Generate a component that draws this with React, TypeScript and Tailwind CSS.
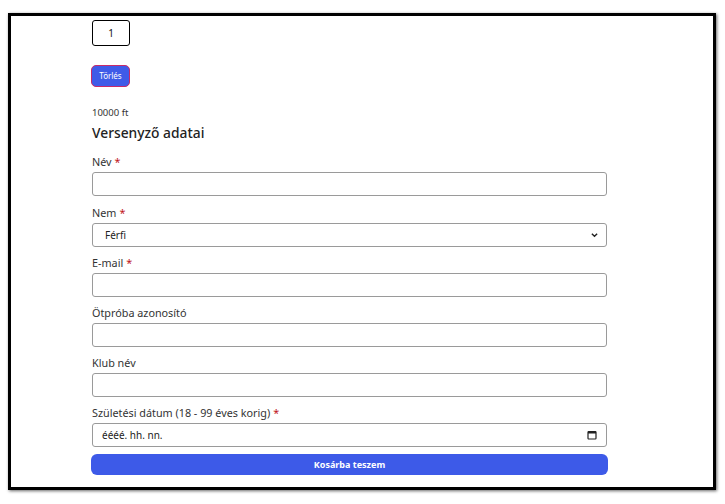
export default function App() {
  const label = "block text-[10.8px] leading-[12px] text-[#333] mb-[4px]";
  const input =
    "block w-full h-[24px] rounded-[3px] border border-[#9a9a9a] bg-white px-[10px] text-[10px] text-[#222] outline-none";
  const req = <span className="text-[#c0151b] ml-[3px]">*</span>;

  return (
    <div className="w-[725px] h-[504px] bg-white pt-[13px] pl-[8px] font-['Noto_Sans',sans-serif]">
      <div className="w-[708px] h-[477px] border-[3px] border-black bg-white shadow-[1px_1px_3px_rgba(0,0,0,0.6)] pl-[81px] pt-[4px]">
        <div className="w-[515px]">
          <div className="w-[38px] h-[26px] rounded-[3px] border-[1.5px] border-black flex items-center justify-center text-[10px] text-[#111]">
            1
          </div>

          <button className="mt-[19px] -ml-[1px] w-[39px] h-[22px] rounded-[5px] bg-[#3f5be8] border-[1.5px] border-[#c72a6a] text-white text-[8px] flex items-center justify-center">
            Törlés
          </button>

          <div className="mt-[20px] text-[9.5px] leading-[12px] text-[#333]">10000 ft</div>
          <h2 className="mt-[4px] text-[13.8px] leading-[20px] font-medium text-[#222]">Versenyző adatai</h2>

          <div className="mt-[13px]">
            <label className={label}>Név{req}</label>
            <input className={input} />
          </div>

          <div className="mt-[11px]">
            <label className={label}>Nem{req}</label>
            <div className="relative">
              <select className={input + " appearance-none pl-[12px]"}>
                <option>Férfi</option>
              </select>
              <svg className="absolute right-[9px] top-[9px] w-[7px] h-[6px]" viewBox="0 0 8 6">
                <path d="M1 1.5 L4 4.5 L7 1.5" fill="none" stroke="#222" strokeWidth="1.6" />
              </svg>
            </div>
          </div>

          <div className="mt-[10px]">
            <label className={label}>E-mail{req}</label>
            <input className={input} />
          </div>

          <div className="mt-[10px]">
            <label className={label}>Ötpróba azonosító</label>
            <input className={input} />
          </div>

          <div className="mt-[10px]">
            <label className={label}>Klub név</label>
            <input className={input} />
          </div>

          <div className="mt-[10px]">
            <label className={label}>Születési dátum (18 - 99 éves korig){req}</label>
            <div className="relative">
              <div className={input + " flex items-center pl-[9px]"}>éééé. hh. nn.</div>
              <svg className="absolute right-[10px] top-[7px] w-[10px] h-[10px]" viewBox="0 0 10 10">
                <rect x="1" y="1.5" width="8" height="7.5" rx="0.8" fill="none" stroke="#222" strokeWidth="1.2" />
                <rect x="1" y="1.5" width="8" height="2" fill="#222" />
              </svg>
            </div>
          </div>

          <button className="mt-[7px] -ml-[1px] w-[517px] h-[21px] rounded-[6px] bg-[#3d5ae8] text-white text-[9px] font-bold">
            Kosárba teszem
          </button>
        </div>
      </div>
    </div>
  );
}
